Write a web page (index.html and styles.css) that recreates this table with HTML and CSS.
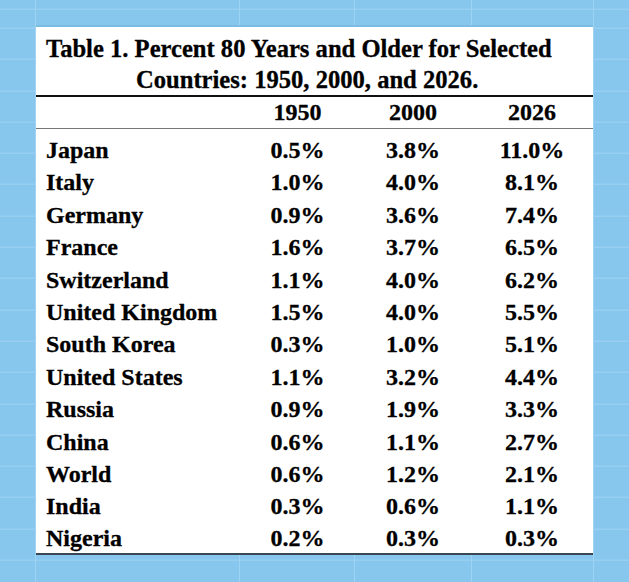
FILE: index.html
```html
<!DOCTYPE html>
<html lang="en">
<head>
<meta charset="utf-8">
<title>Table 1. Percent 80 Years and Older</title>
<link rel="stylesheet" href="styles.css">
</head>
<body>
<div class="card">
  <div class="title">
    <div class="title-line first">Table 1. Percent 80 Years and Older for Selected</div>
    <div class="title-line second">Countries: 1950, 2000, and 2026.</div>
  </div>
  <table class="data">
    <colgroup>
      <col class="c-label">
      <col class="c-1950">
      <col class="c-2000">
      <col class="c-2026">
    </colgroup>
    <thead>
      <tr><th></th><th>1950</th><th>2000</th><th>2026</th></tr>
    </thead>
    <tbody>
      <tr><td>Japan</td><td>0.5%</td><td>3.8%</td><td>11.0%</td></tr>
      <tr><td>Italy</td><td>1.0%</td><td>4.0%</td><td>8.1%</td></tr>
      <tr><td>Germany</td><td>0.9%</td><td>3.6%</td><td>7.4%</td></tr>
      <tr><td>France</td><td>1.6%</td><td>3.7%</td><td>6.5%</td></tr>
      <tr><td>Switzerland</td><td>1.1%</td><td>4.0%</td><td>6.2%</td></tr>
      <tr><td>United Kingdom</td><td>1.5%</td><td>4.0%</td><td>5.5%</td></tr>
      <tr><td>South Korea</td><td>0.3%</td><td>1.0%</td><td>5.1%</td></tr>
      <tr><td>United States</td><td>1.1%</td><td>3.2%</td><td>4.4%</td></tr>
      <tr><td>Russia</td><td>0.9%</td><td>1.9%</td><td>3.3%</td></tr>
      <tr><td>China</td><td>0.6%</td><td>1.1%</td><td>2.7%</td></tr>
      <tr><td>World</td><td>0.6%</td><td>1.2%</td><td>2.1%</td></tr>
      <tr><td>India</td><td>0.3%</td><td>0.6%</td><td>1.1%</td></tr>
      <tr><td>Nigeria</td><td>0.2%</td><td>0.3%</td><td>0.3%</td></tr>
    </tbody>
  </table>
</div>
</body>
</html>
```

FILE: styles.css
```css
html, body {
  margin: 0;
  padding: 0;
}

body {
  min-height: 582px;
  background-color: #87c7ee;
  background-image:
    linear-gradient(to right,
      transparent 35px, #9fd3f3 35px 36px,
      transparent 36px 239px, #9fd3f3 239px 240px,
      transparent 240px 354px, #9fd3f3 354px 355px,
      transparent 355px 471px, #9fd3f3 471px 472px,
      transparent 472px 593px, #9fd3f3 593px 594px,
      transparent 594px),
    repeating-linear-gradient(to bottom, #9fd3f3 0 1px, transparent 1px 31.3px);
  background-position: 0 0, 0 27.7px;
  font-family: "Liberation Serif", "Times New Roman", serif;
  font-weight: bold;
  font-size: 24px;
  color: #000;
  -webkit-text-stroke: 0.3px #000;
  overflow: hidden;
}

.card {
  margin: 25px 0 0 36px;
  width: 557px;
  background: #fff;
  border-top: 2px solid #7cbbe2;
  border-bottom: 2px solid #3a4652;
}

.title {
  padding-top: 6px;
  border-bottom: 2px solid #111;
  font-size: 24.6px;
}

.title-line {
  line-height: 31px;
  white-space: nowrap;
}

.title-line.first {
  padding-left: 10px;
}

.title-line.second {
  padding-left: 100px;
}

.data {
  width: 100%;
  border-collapse: collapse;
  table-layout: fixed;
}

.c-label { width: 204px; }
.c-1950 { width: 115px; }
.c-2000 { width: 116px; }
.c-2026 { width: 122px; }

.data th,
.data td {
  padding: 0;
  text-align: center;
  font-weight: bold;
  white-space: nowrap;
}

.data th {
  line-height: 31px;
  border-bottom: 1px solid #777;
}

.data td {
  line-height: 32.4px;
}

.data td:first-child {
  text-align: left;
  padding-left: 10px;
}

.data tbody tr:first-child td {
  padding-top: 5px;
}

.data tbody tr:last-child td {
  line-height: 30px;
}
```
